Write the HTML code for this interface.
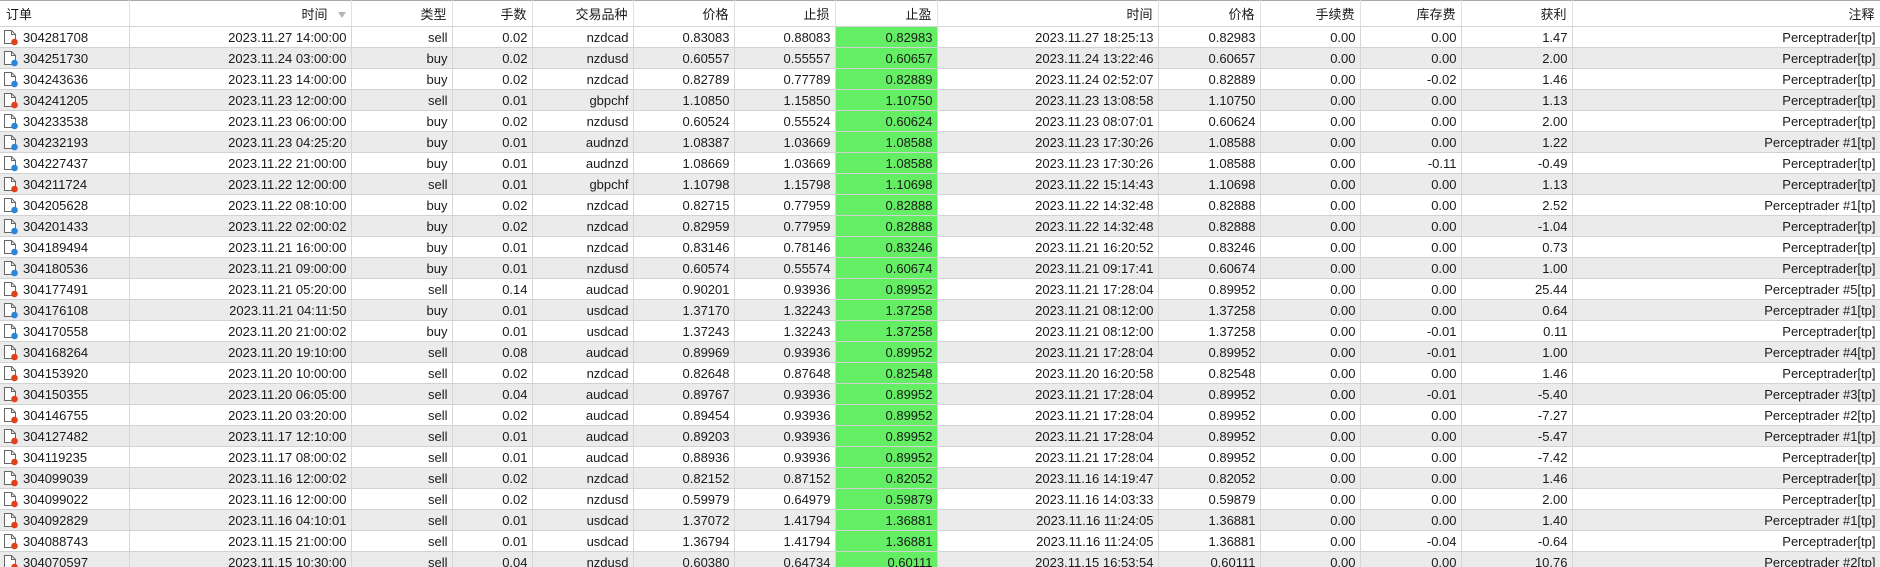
<!DOCTYPE html>
<html><head><meta charset="utf-8">
<style>
html,body{margin:0;padding:0;background:#fff;width:1880px;height:567px;overflow:hidden}
table{border-collapse:collapse;table-layout:fixed;width:1880px;font-family:"Liberation Sans","Noto Sans CJK SC",sans-serif;font-size:13px;color:#1a1a1a}
th{height:25px;font-weight:normal;text-align:right;padding:0 5px 0 0;border-top:1px solid #a8a8a8;border-bottom:1px solid #d4d4d4;border-right:1px solid #e0e0e0;background:#fff;white-space:nowrap}
th:first-child{text-align:left;padding-left:6px}
td{height:20px;padding:0 4px 0 0;text-align:right;border-bottom:1px solid #d2d2d2;border-right:1px solid #d6d6d6;white-space:nowrap;overflow:hidden;background:#fff}
tr:nth-child(odd) td{background:#ebebeb}
td.g{background:#63ee63 !important}
td:first-child{text-align:left;padding-left:3px}
td:first-child svg{vertical-align:-4px;margin-right:4px}
.s{display:inline-block;width:0;height:0;border-left:4px solid transparent;border-right:4px solid transparent;border-top:6px solid #999;margin-left:10px;vertical-align:1px;opacity:.7}
</style></head><body>
<svg width="0" height="0" style="position:absolute">
<defs>
<g id="doc"><path d="M1.5 1.5h7l4 4v9h-11z" fill="#fff" stroke="#666" stroke-width="1"/><path d="M8.5 1.5v4h4" fill="none" stroke="#666"/></g>
</defs></svg>
<table>
<colgroup>
<col style="width:129px"><col style="width:222px"><col style="width:101px"><col style="width:80px"><col style="width:101px"><col style="width:101px"><col style="width:101px"><col style="width:102px"><col style="width:221px"><col style="width:102px"><col style="width:100px"><col style="width:101px"><col style="width:111px"><col style="width:308px">
</colgroup>
<tr><th>订单</th><th>时间<span class="s"></span></th><th>类型</th><th>手数</th><th>交易品种</th><th>价格</th><th>止损</th><th>止盈</th><th>时间</th><th>价格</th><th>手续费</th><th>库存费</th><th>获利</th><th>注释</th></tr>
<tr><td><svg width="16" height="17"><use href="#doc"/><circle cx="11.5" cy="13" r="3.3" fill="#e0401a"/></svg>304281708</td><td>2023.11.27 14:00:00</td><td>sell</td><td>0.02</td><td>nzdcad</td><td>0.83083</td><td>0.88083</td><td class="g">0.82983</td><td>2023.11.27 18:25:13</td><td>0.82983</td><td>0.00</td><td>0.00</td><td>1.47</td><td>Perceptrader[tp]</td></tr>
<tr><td><svg width="16" height="17"><use href="#doc"/><circle cx="11.5" cy="13" r="3.3" fill="#2a86d8"/></svg>304251730</td><td>2023.11.24 03:00:00</td><td>buy</td><td>0.02</td><td>nzdusd</td><td>0.60557</td><td>0.55557</td><td class="g">0.60657</td><td>2023.11.24 13:22:46</td><td>0.60657</td><td>0.00</td><td>0.00</td><td>2.00</td><td>Perceptrader[tp]</td></tr>
<tr><td><svg width="16" height="17"><use href="#doc"/><circle cx="11.5" cy="13" r="3.3" fill="#2a86d8"/></svg>304243636</td><td>2023.11.23 14:00:00</td><td>buy</td><td>0.02</td><td>nzdcad</td><td>0.82789</td><td>0.77789</td><td class="g">0.82889</td><td>2023.11.24 02:52:07</td><td>0.82889</td><td>0.00</td><td>-0.02</td><td>1.46</td><td>Perceptrader[tp]</td></tr>
<tr><td><svg width="16" height="17"><use href="#doc"/><circle cx="11.5" cy="13" r="3.3" fill="#e0401a"/></svg>304241205</td><td>2023.11.23 12:00:00</td><td>sell</td><td>0.01</td><td>gbpchf</td><td>1.10850</td><td>1.15850</td><td class="g">1.10750</td><td>2023.11.23 13:08:58</td><td>1.10750</td><td>0.00</td><td>0.00</td><td>1.13</td><td>Perceptrader[tp]</td></tr>
<tr><td><svg width="16" height="17"><use href="#doc"/><circle cx="11.5" cy="13" r="3.3" fill="#2a86d8"/></svg>304233538</td><td>2023.11.23 06:00:00</td><td>buy</td><td>0.02</td><td>nzdusd</td><td>0.60524</td><td>0.55524</td><td class="g">0.60624</td><td>2023.11.23 08:07:01</td><td>0.60624</td><td>0.00</td><td>0.00</td><td>2.00</td><td>Perceptrader[tp]</td></tr>
<tr><td><svg width="16" height="17"><use href="#doc"/><circle cx="11.5" cy="13" r="3.3" fill="#2a86d8"/></svg>304232193</td><td>2023.11.23 04:25:20</td><td>buy</td><td>0.01</td><td>audnzd</td><td>1.08387</td><td>1.03669</td><td class="g">1.08588</td><td>2023.11.23 17:30:26</td><td>1.08588</td><td>0.00</td><td>0.00</td><td>1.22</td><td>Perceptrader #1[tp]</td></tr>
<tr><td><svg width="16" height="17"><use href="#doc"/><circle cx="11.5" cy="13" r="3.3" fill="#2a86d8"/></svg>304227437</td><td>2023.11.22 21:00:00</td><td>buy</td><td>0.01</td><td>audnzd</td><td>1.08669</td><td>1.03669</td><td class="g">1.08588</td><td>2023.11.23 17:30:26</td><td>1.08588</td><td>0.00</td><td>-0.11</td><td>-0.49</td><td>Perceptrader[tp]</td></tr>
<tr><td><svg width="16" height="17"><use href="#doc"/><circle cx="11.5" cy="13" r="3.3" fill="#e0401a"/></svg>304211724</td><td>2023.11.22 12:00:00</td><td>sell</td><td>0.01</td><td>gbpchf</td><td>1.10798</td><td>1.15798</td><td class="g">1.10698</td><td>2023.11.22 15:14:43</td><td>1.10698</td><td>0.00</td><td>0.00</td><td>1.13</td><td>Perceptrader[tp]</td></tr>
<tr><td><svg width="16" height="17"><use href="#doc"/><circle cx="11.5" cy="13" r="3.3" fill="#2a86d8"/></svg>304205628</td><td>2023.11.22 08:10:00</td><td>buy</td><td>0.02</td><td>nzdcad</td><td>0.82715</td><td>0.77959</td><td class="g">0.82888</td><td>2023.11.22 14:32:48</td><td>0.82888</td><td>0.00</td><td>0.00</td><td>2.52</td><td>Perceptrader #1[tp]</td></tr>
<tr><td><svg width="16" height="17"><use href="#doc"/><circle cx="11.5" cy="13" r="3.3" fill="#2a86d8"/></svg>304201433</td><td>2023.11.22 02:00:02</td><td>buy</td><td>0.02</td><td>nzdcad</td><td>0.82959</td><td>0.77959</td><td class="g">0.82888</td><td>2023.11.22 14:32:48</td><td>0.82888</td><td>0.00</td><td>0.00</td><td>-1.04</td><td>Perceptrader[tp]</td></tr>
<tr><td><svg width="16" height="17"><use href="#doc"/><circle cx="11.5" cy="13" r="3.3" fill="#2a86d8"/></svg>304189494</td><td>2023.11.21 16:00:00</td><td>buy</td><td>0.01</td><td>nzdcad</td><td>0.83146</td><td>0.78146</td><td class="g">0.83246</td><td>2023.11.21 16:20:52</td><td>0.83246</td><td>0.00</td><td>0.00</td><td>0.73</td><td>Perceptrader[tp]</td></tr>
<tr><td><svg width="16" height="17"><use href="#doc"/><circle cx="11.5" cy="13" r="3.3" fill="#2a86d8"/></svg>304180536</td><td>2023.11.21 09:00:00</td><td>buy</td><td>0.01</td><td>nzdusd</td><td>0.60574</td><td>0.55574</td><td class="g">0.60674</td><td>2023.11.21 09:17:41</td><td>0.60674</td><td>0.00</td><td>0.00</td><td>1.00</td><td>Perceptrader[tp]</td></tr>
<tr><td><svg width="16" height="17"><use href="#doc"/><circle cx="11.5" cy="13" r="3.3" fill="#e0401a"/></svg>304177491</td><td>2023.11.21 05:20:00</td><td>sell</td><td>0.14</td><td>audcad</td><td>0.90201</td><td>0.93936</td><td class="g">0.89952</td><td>2023.11.21 17:28:04</td><td>0.89952</td><td>0.00</td><td>0.00</td><td>25.44</td><td>Perceptrader #5[tp]</td></tr>
<tr><td><svg width="16" height="17"><use href="#doc"/><circle cx="11.5" cy="13" r="3.3" fill="#2a86d8"/></svg>304176108</td><td>2023.11.21 04:11:50</td><td>buy</td><td>0.01</td><td>usdcad</td><td>1.37170</td><td>1.32243</td><td class="g">1.37258</td><td>2023.11.21 08:12:00</td><td>1.37258</td><td>0.00</td><td>0.00</td><td>0.64</td><td>Perceptrader #1[tp]</td></tr>
<tr><td><svg width="16" height="17"><use href="#doc"/><circle cx="11.5" cy="13" r="3.3" fill="#2a86d8"/></svg>304170558</td><td>2023.11.20 21:00:02</td><td>buy</td><td>0.01</td><td>usdcad</td><td>1.37243</td><td>1.32243</td><td class="g">1.37258</td><td>2023.11.21 08:12:00</td><td>1.37258</td><td>0.00</td><td>-0.01</td><td>0.11</td><td>Perceptrader[tp]</td></tr>
<tr><td><svg width="16" height="17"><use href="#doc"/><circle cx="11.5" cy="13" r="3.3" fill="#e0401a"/></svg>304168264</td><td>2023.11.20 19:10:00</td><td>sell</td><td>0.08</td><td>audcad</td><td>0.89969</td><td>0.93936</td><td class="g">0.89952</td><td>2023.11.21 17:28:04</td><td>0.89952</td><td>0.00</td><td>-0.01</td><td>1.00</td><td>Perceptrader #4[tp]</td></tr>
<tr><td><svg width="16" height="17"><use href="#doc"/><circle cx="11.5" cy="13" r="3.3" fill="#e0401a"/></svg>304153920</td><td>2023.11.20 10:00:00</td><td>sell</td><td>0.02</td><td>nzdcad</td><td>0.82648</td><td>0.87648</td><td class="g">0.82548</td><td>2023.11.20 16:20:58</td><td>0.82548</td><td>0.00</td><td>0.00</td><td>1.46</td><td>Perceptrader[tp]</td></tr>
<tr><td><svg width="16" height="17"><use href="#doc"/><circle cx="11.5" cy="13" r="3.3" fill="#e0401a"/></svg>304150355</td><td>2023.11.20 06:05:00</td><td>sell</td><td>0.04</td><td>audcad</td><td>0.89767</td><td>0.93936</td><td class="g">0.89952</td><td>2023.11.21 17:28:04</td><td>0.89952</td><td>0.00</td><td>-0.01</td><td>-5.40</td><td>Perceptrader #3[tp]</td></tr>
<tr><td><svg width="16" height="17"><use href="#doc"/><circle cx="11.5" cy="13" r="3.3" fill="#e0401a"/></svg>304146755</td><td>2023.11.20 03:20:00</td><td>sell</td><td>0.02</td><td>audcad</td><td>0.89454</td><td>0.93936</td><td class="g">0.89952</td><td>2023.11.21 17:28:04</td><td>0.89952</td><td>0.00</td><td>0.00</td><td>-7.27</td><td>Perceptrader #2[tp]</td></tr>
<tr><td><svg width="16" height="17"><use href="#doc"/><circle cx="11.5" cy="13" r="3.3" fill="#e0401a"/></svg>304127482</td><td>2023.11.17 12:10:00</td><td>sell</td><td>0.01</td><td>audcad</td><td>0.89203</td><td>0.93936</td><td class="g">0.89952</td><td>2023.11.21 17:28:04</td><td>0.89952</td><td>0.00</td><td>0.00</td><td>-5.47</td><td>Perceptrader #1[tp]</td></tr>
<tr><td><svg width="16" height="17"><use href="#doc"/><circle cx="11.5" cy="13" r="3.3" fill="#e0401a"/></svg>304119235</td><td>2023.11.17 08:00:02</td><td>sell</td><td>0.01</td><td>audcad</td><td>0.88936</td><td>0.93936</td><td class="g">0.89952</td><td>2023.11.21 17:28:04</td><td>0.89952</td><td>0.00</td><td>0.00</td><td>-7.42</td><td>Perceptrader[tp]</td></tr>
<tr><td><svg width="16" height="17"><use href="#doc"/><circle cx="11.5" cy="13" r="3.3" fill="#e0401a"/></svg>304099039</td><td>2023.11.16 12:00:02</td><td>sell</td><td>0.02</td><td>nzdcad</td><td>0.82152</td><td>0.87152</td><td class="g">0.82052</td><td>2023.11.16 14:19:47</td><td>0.82052</td><td>0.00</td><td>0.00</td><td>1.46</td><td>Perceptrader[tp]</td></tr>
<tr><td><svg width="16" height="17"><use href="#doc"/><circle cx="11.5" cy="13" r="3.3" fill="#e0401a"/></svg>304099022</td><td>2023.11.16 12:00:00</td><td>sell</td><td>0.02</td><td>nzdusd</td><td>0.59979</td><td>0.64979</td><td class="g">0.59879</td><td>2023.11.16 14:03:33</td><td>0.59879</td><td>0.00</td><td>0.00</td><td>2.00</td><td>Perceptrader[tp]</td></tr>
<tr><td><svg width="16" height="17"><use href="#doc"/><circle cx="11.5" cy="13" r="3.3" fill="#e0401a"/></svg>304092829</td><td>2023.11.16 04:10:01</td><td>sell</td><td>0.01</td><td>usdcad</td><td>1.37072</td><td>1.41794</td><td class="g">1.36881</td><td>2023.11.16 11:24:05</td><td>1.36881</td><td>0.00</td><td>0.00</td><td>1.40</td><td>Perceptrader #1[tp]</td></tr>
<tr><td><svg width="16" height="17"><use href="#doc"/><circle cx="11.5" cy="13" r="3.3" fill="#e0401a"/></svg>304088743</td><td>2023.11.15 21:00:00</td><td>sell</td><td>0.01</td><td>usdcad</td><td>1.36794</td><td>1.41794</td><td class="g">1.36881</td><td>2023.11.16 11:24:05</td><td>1.36881</td><td>0.00</td><td>-0.04</td><td>-0.64</td><td>Perceptrader[tp]</td></tr>
<tr><td><svg width="16" height="17"><use href="#doc"/><circle cx="11.5" cy="13" r="3.3" fill="#e0401a"/></svg>304070597</td><td>2023.11.15 10:30:00</td><td>sell</td><td>0.04</td><td>nzdusd</td><td>0.60380</td><td>0.64734</td><td class="g">0.60111</td><td>2023.11.15 16:53:54</td><td>0.60111</td><td>0.00</td><td>0.00</td><td>10.76</td><td>Perceptrader #2[tp]</td></tr>
</table>
</body></html>
